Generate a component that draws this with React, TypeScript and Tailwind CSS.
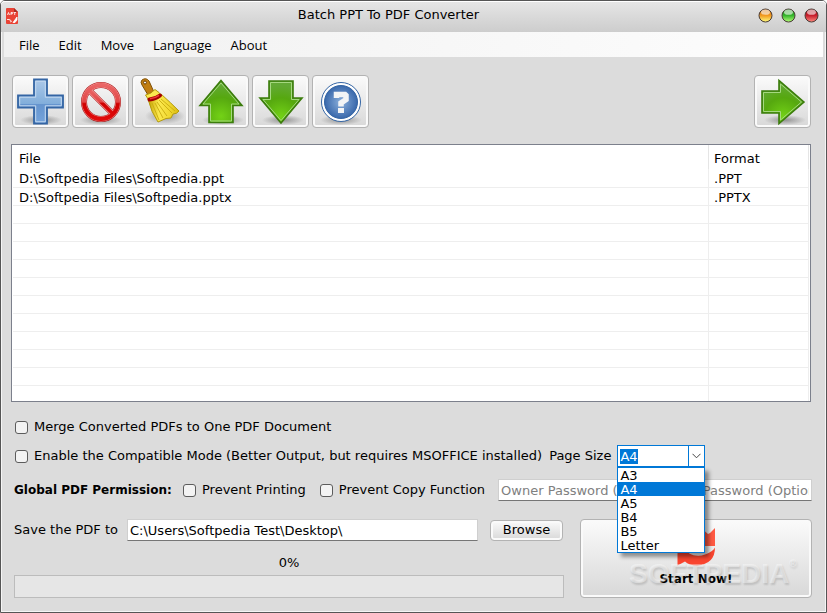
import { useEffect, useRef, type ReactNode } from "react";

const edge = "border border-[#b3b3b3] rounded-[4px] shadow-[inset_0_0_0_2px_#fafafa] bg-linear-to-b from-[#fbfbfb] to-[#d8d8d8]";

function ToolButton({ label, children }: { label: string; children: ReactNode }) {
  return (
    <button type="button" aria-label={label} className={"flex h-[53px] w-[57px] shrink-0 items-center justify-center " + edge}>
      <svg viewBox="0 0 48 48" className="h-12 w-12">{children}</svg>
    </button>
  );
}

function Shadow({ cx = 24, rx = 21 }: { cx?: number; rx?: number }) {
  return <ellipse cx={cx} cy="42" rx={rx} ry="5" fill="url(#shade)" />;
}

const arrows = {
  up: ["M24 2.500 45 27.500H36V44.500H12V27.500H3Z", "M24 5 42 26H34.500V43H13.500V26H6Z"],
  down: ["M24 45 45 20H36V3H12V20H3Z", "M24 42.500 42 21.500H34.500V4.500H13.500V21.500H6Z"],
  right: ["M45 24 20 2.500V13H3V35H20V45.500Z", "M42.500 24 21.500 6V14.500H4.500V33.500H21.500V42Z"],
};

function Arrow({ to }: { to: keyof typeof arrows }) {
  const [outer, inner] = arrows[to];
  return (
    <>
      <Shadow cx={26} />
      <path d={outer} fill="url(#green)" stroke="#3b7c0c" strokeWidth="1.600" />
      <path d={inner} fill="none" stroke="#a5d880" strokeWidth="1" />
    </>
  );
}

function Gem({ label, hue }: { label: string; hue: string }) {
  return (
    <button type="button" aria-label={label} className="h-[15px] w-[15px]">
      <svg viewBox="0 0 15 15" className="block h-full w-full">
        <circle cx="7.5" cy="7.5" r="6.5" fill={`url(#${hue})`} stroke="#493b35" strokeWidth="1" />
        <ellipse cx="7.5" cy="4.2" rx="4.4" ry="2.600" fill="#fff" opacity=".6" />
      </svg>
    </button>
  );
}

function Check({ label }: { label: string }) {
  return (
    <label className="flex items-center gap-[6px] whitespace-nowrap">
      <input type="checkbox" className="h-[13px] w-[13px] appearance-none rounded-[3px] border border-[#5c5c5c] bg-[#f3f3f3]" />
      {label}
    </label>
  );
}

function PageSize() {
  const field = useRef<HTMLInputElement>(null);
  useEffect(() => {
    field.current?.focus();
    field.current?.select();
  }, []);
  return (
    <div className="relative flex items-center gap-[6px]">
      <label htmlFor="page-size">Page Size</label>
      <div className="relative">
        <div className="flex h-[22px] w-[88px] border border-[#0078d7] bg-white">
          <input id="page-size" ref={field} defaultValue="A4" className="h-full w-[70px] px-[2px] outline-none selection:bg-[#0078d7] selection:text-white" />
          <button type="button" aria-label="Show page sizes" className="flex flex-1 items-center justify-center border-l border-[#0078d7]">
            <svg viewBox="0 0 9 6" className="h-[6px] w-[9px]"><path d="M.5.8 4.5 4.8 8.5.8" fill="none" stroke="#444" /></svg>
          </button>
        </div>
        <select aria-label="Page sizes" size={6} defaultValue="A4" className="absolute top-[22px] left-0 z-20 h-[86px] w-[88px] overflow-hidden border border-[#0078d7] bg-white bg-none p-0 shadow-[4px_4px_4px_rgba(0,0,0,0.4)] outline-none">
          {["A3", "A4", "A5", "B4", "B5", "Letter"].map((s) => (
            <option key={s} value={s} className="h-[14px] min-h-[14px] p-0 pl-[2px] leading-[14px] checked:bg-linear-to-r checked:from-[#0078d7] checked:to-[#0078d7] checked:text-white">{s}</option>
          ))}
        </select>
      </div>
    </div>
  );
}

const files = [
  ["D:\\Softpedia Files\\Softpedia.ppt", ".PPT"],
  ["D:\\Softpedia Files\\Softpedia.pptx", ".PPTX"],
  ...Array.from({ length: 11 }, () => ["", ""]),
];

const textBox = "border border-[#cfcfcf] border-b-[#767676] bg-white px-[2px] outline-none";

export default function App() {
  return (
    <main className="flex min-h-screen flex-col rounded-t-[5px] border border-[#555] bg-[#dcdcdc] font-['DejaVu_Sans',sans-serif] text-[13px] leading-4 text-black shadow-[inset_0_0_0_1px_#f5f5f5]">
      <svg className="absolute h-0 w-0" aria-hidden="true">
        <defs>
          <radialGradient id="shade"><stop stopColor="#555" stopOpacity=".55" /><stop offset="1" stopColor="#555" stopOpacity="0" /></radialGradient>
          <radialGradient id="green" cx=".5" cy=".85" r=".75"><stop stopColor="#73d216" /><stop offset=".6" stopColor="#56a80f" /><stop offset="1" stopColor="#62a934" /></radialGradient>
          <linearGradient id="blue" x2="0" y2="1"><stop stopColor="#abc8e8" /><stop offset=".55" stopColor="#82aedb" /><stop offset=".56" stopColor="#6594ce" /><stop offset="1" stopColor="#75a4dc" /></linearGradient>
          <linearGradient id="red" x2="0" y2="1"><stop stopColor="#ea6666" /><stop offset=".5" stopColor="#e24646" /><stop offset=".55" stopColor="#cf0000" /><stop offset="1" stopColor="#e00a0a" /></linearGradient>
          <radialGradient id="help"><stop stopColor="#8bb0dc" /><stop offset="1" stopColor="#3968ab" /></radialGradient>
          <linearGradient id="broom" x2="1"><stop stopColor="#c4a000" /><stop offset=".35" stopColor="#fce94f" /><stop offset=".7" stopColor="#f0d830" /><stop offset="1" stopColor="#d9ba10" /></linearGradient>
          <linearGradient id="gem-orange" x2="0" y2="1"><stop stopColor="#c86a10" /><stop offset=".5" stopColor="#f29a20" /><stop offset="1" stopColor="#ffff80" /></linearGradient>
          <linearGradient id="gem-green" x2="0" y2="1"><stop stopColor="#1d8a1d" /><stop offset=".5" stopColor="#35b52c" /><stop offset="1" stopColor="#b6ff7a" /></linearGradient>
          <linearGradient id="gem-red" x2="0" y2="1"><stop stopColor="#a01018" /><stop offset=".5" stopColor="#c81f2c" /><stop offset="1" stopColor="#ff8a80" /></linearGradient>
        </defs>
      </svg>

      <header className="flex h-[31px] items-center justify-between rounded-t-[4px] bg-linear-to-b from-[#e6e6e6] to-[#cdcdcd] pr-[7px] pb-[2px] pl-1 shadow-[inset_0_1px_0_#fff]">
        <svg viewBox="0 0 14 18" className="h-[18px] w-[14px]">
          <path d="M2 1h7l4 4v11q0 1-1 1H2q-1 0-1-1V2q0-1 1-1Z" fill="#e94335" />
          <path d="M9 1v4h4Z" fill="#a92b22" />
          <path d="M2.500 8 3.500 5.500l1 2.500M6 8V5.500h1.500v1.200H6M8.500 5.500H11M9.700 5.500V8" fill="none" stroke="#fff" strokeWidth=".8" />
          <path d="M2 12.500h2l2 1M8 15.500l4-5.500v3l-2 2.500ZM5 15l2-1" fill="#fff" stroke="#fff" strokeWidth=".8" />
        </svg>
        <h1 className="pb-[2px] text-[13px] leading-4">Batch PPT To PDF Converter</h1>
        <div className="flex gap-2">
          <Gem label="Minimize" hue="gem-orange" />
          <Gem label="Maximize" hue="gem-green" />
          <Gem label="Close" hue="gem-red" />
        </div>
      </header>

      <nav className="mx-[3px] flex h-[25px] items-center gap-[19px] bg-linear-to-r from-[#f0f0f0] to-[#fdfdfd] px-[15px] font-['Open_Sans',sans-serif]">
        {["File", "Edit", "Move", "Language", "About"].map((m) => <button type="button" key={m}>{m}</button>)}
      </nav>

      <div className="mt-[18px] flex gap-[3px] pr-[15px] pl-[11px]">
        <ToolButton label="Add files">
          <Shadow />
          <path d="M17 1.500h13V17.500h16v12H30v16H17v-16H1v-12h16Z" fill="url(#blue)" stroke="#3465a4" strokeWidth="1.800" />
          <path d="M18.700 3.200h9.600v16h16v8.600h-16v16h-9.600v-16h-16v-8.600h16Z" fill="none" stroke="#c5daf0" />
        </ToolButton>
        <ToolButton label="Remove file">
          <Shadow />
          <g fill="none">
            <circle cx="24" cy="24" r="17" stroke="#b01818" strokeWidth="6" />
            <path d="M12 12 36 36" stroke="#b01818" strokeWidth="6" />
            <circle cx="24" cy="24" r="17" stroke="#f29a9a" strokeWidth="4.800" />
            <path d="M12 12 36 36" stroke="#f29a9a" strokeWidth="4.800" />
            <path d="M12 12 36 36" stroke="url(#red)" strokeWidth="3.600" /><circle cx="24" cy="24" r="17" stroke="url(#red)" strokeWidth="4" />
          </g>
        </ToolButton>
        <ToolButton label="Clear list">
          <ellipse cx="28" cy="38" rx="20" ry="8" fill="url(#shade)" />
          <path d="M5 2Q9-1 12 3l4.500 10-5.500 4-6-10Q3 4 5 2Z" fill="#c17d11" stroke="#805107" /><circle cx="8" cy="4.500" r="1.500" fill="#eee" stroke="#704000" />
          <path d="M11 21q7-1 13-5 10 9 18 17-2 3-6 3l-2 4-5 .5-8 3.500Q14 34 11 21Z" fill="url(#broom)" stroke="#b39b10" />
          <path d="M8.500 17Q14 16 18 11.500l4 3 2 3-12 5Z" fill="#fce94f" stroke="#b39b10" />
          <path d="M15 25l7 17M18 25l8 15M20 24l10 14M22 22l13 13M24 21l14 12" fill="none" stroke="#c9ab10" strokeWidth=".9" />
          <path d="M12.500 21.500q6-.5 10.500-4" fill="none" stroke="#a40000" strokeWidth="4" strokeLinecap="round" />
          <path d="M13 20.800q5-.5 9-3.500" fill="none" stroke="#ef3838" strokeWidth="1.500" />
        </ToolButton>
        <ToolButton label="Move up"><Arrow to="up" /></ToolButton>
        <ToolButton label="Move down"><Arrow to="down" /></ToolButton>
        <ToolButton label="Help">
          <Shadow />
          <circle cx="24" cy="24" r="19.500" fill="#fff" stroke="#3465a4" /><circle cx="24" cy="24" r="16.500" fill="url(#help)" stroke="#3465a4" />
          <path d="M19.500 20V16.500h8.500l1 1v4l-5 3.500v3.500" fill="none" stroke="#f2f4f6" strokeWidth="5.500" /><path d="M21 30h6v5h-6Z" fill="#f2f4f6" />
        </ToolButton>
        <div className="flex-1" />
        <ToolButton label="Next"><Arrow to="right" /></ToolButton>
      </div>

      <div className="mr-[15px] ml-[10px] mt-4 h-[258px] overflow-hidden border border-[#7c808c] bg-white px-px">
        <table className="w-full table-fixed border-collapse">
          <thead>
            <tr className="h-[24px]">
              <th className="border-r border-[#e5e5e5] p-0 pt-[4px] pl-[6px] text-left font-normal">File</th>
              <th className="w-[100px] border-r border-[#e5e5e5] p-0 pt-[4px] pl-[5px] text-left font-normal">Format</th>
            </tr>
          </thead>
          <tbody>
            {files.map(([name, kind], i) => (
              <tr key={i} className="h-[18px] border-b border-[#eeeeee] leading-[14px]">
                <td className="border-r border-[#eeeeee] p-0 pt-[3px] pl-[6px]">{name}</td>
                <td className="border-r border-[#eeeeee] p-0 pt-[3px] pl-[5px]">{kind}</td>
              </tr>
            ))}
          </tbody>
        </table>
      </div>

      <div className="mt-4 flex h-[18px] items-center pl-[14px]"><Check label="Merge Converted PDFs to One PDF Document" /></div>
      <div className="mt-[5px] flex h-[30px] items-center gap-[7px] pl-[14px]">
        <Check label="Enable the Compatible Mode (Better Output, but requires MSOFFICE installed)" />
        <PageSize />
      </div>
      <div className="mt-2 flex h-[22px] items-center pr-[14px] pl-[13px]">
        <span className="w-[169px] shrink-0 text-[12px] font-bold whitespace-nowrap">Global PDF Permission:</span>
        <Check label="Prevent Printing" />
        <span className="w-[14px] shrink-0" />
        <Check label="Prevent Copy Function" />
        <input aria-label="Owner password" placeholder="Owner Password (Optional)" className={"ml-[13px] h-[22px] w-[164px] min-w-0 placeholder:text-[#808080] " + textBox} />
        <input aria-label="User password" placeholder="User Password (Optional)" className={"ml-1 h-[22px] min-w-0 flex-1 placeholder:text-[#808080] " + textBox} />
      </div>

      <div className="mt-[18px] flex gap-4 pr-[14px] pl-[13px]">
        <div className="flex flex-1 flex-col">
          <div className="flex h-[22px] items-center">
            <label htmlFor="folder" className="w-[113px]">Save the PDF to</label>
            <input id="folder" defaultValue={"C:\\Users\\Softpedia Test\\Desktop\\"} className={"h-[22px] min-w-0 flex-1 " + textBox} />
            <button type="button" className={"mr-px ml-3 h-[21px] w-[73px] " + edge}>Browse</button>
          </div>
          <span className="mt-[14px] text-center">0%</span>
          <div role="progressbar" aria-valuenow={0} className="mt-1 h-[23px] border border-[#bcbcbc] bg-[#e6e6e6]" />
        </div>
        <button type="button" className={"relative flex h-[79px] w-[232px] flex-col items-center justify-end gap-[5px] pb-[10px] text-[12px] font-bold " + edge}>
          <svg viewBox="0 0 38 38" className="h-[38px] w-[38px]">
            <path d="M38 0v18H20l6-6Q18 6 10 14l-9 4Q3 4 14 1q10-2 17 5l2-1Z" fill="#ff5a43" />
            <path d="M38 19.500Q38 36 20 37.500q-8 0-12-4L.5 37.500V19.500H17l-5 6q8 4 16 1 8-3 10-7Z" fill="#f9452f" />
          </svg>
          <span>Start Now!</span>
          <span className="absolute top-[38px] left-[48px] flex items-start font-['Liberation_Sans',sans-serif] text-[28px] leading-8 text-[#ffffff66] [text-shadow:1px_2px_2px_#00000024]">SOFTPEDIA<span className="text-[10px] leading-3">®</span></span>
        </button>
      </div>
    </main>
  );
}
